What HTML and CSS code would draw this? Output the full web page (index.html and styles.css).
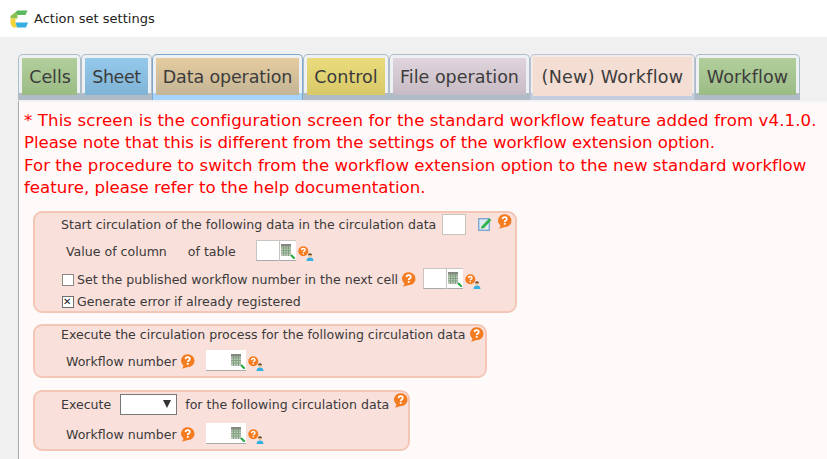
FILE: index.html
```html
<!DOCTYPE html>
<html lang="en">
<head>
<meta charset="utf-8">
<title>Action set settings</title>
<link rel="stylesheet" href="styles.css">
</head>
<body>
<svg class="defs" width="0" height="0" aria-hidden="true">
  <defs>
    <symbol id="help" viewBox="0 0 14 15">
      <path d="M7.300 .3a6.400 6.400 0 0 1 .6 12.800C6 13.300 3.500 14.800 1.200 14.600c1-.8 1.600-1.600 1.700-3A6.400 6.400 0 0 1 7.300 .3z" fill="#f47c20"/>
      <path d="M5 5.100c.1-1.400 1-2 2.200-2 1.300 0 2.100.8 2.100 1.800 0 1.500-2.100 1.600-2.100 3.100" fill="none" stroke="#fff" stroke-width="1.700"/>
      <rect x="6.300" y="8.900" width="1.800" height="1.800" fill="#fff"/>
    </symbol>
    <symbol id="grid" viewBox="0 0 16 16">
      <rect x="1" y="1" width="10" height="12" fill="#c5c9c2"/>
      <path d="M1 5h10M1 7.500h10M1 10h10M3.500 3v10M6 3v10M8.500 3v10" stroke="#7da47d" stroke-width="1"/>
      <rect x="1" y="1" width="10" height="2.500" fill="#83897f"/>
      <path d="M11 12l3.700 3.700" stroke="#22a83a" stroke-width="2"/>
    </symbol>
    <symbol id="helpuser" viewBox="0 0 16 15">
      <circle cx="5.300" cy="5.300" r="5" fill="#f47c20"/>
      <path d="M3.400 4.100c.1-1.100.9-1.600 1.900-1.600 1.100 0 1.800.7 1.800 1.400 0 1.200-1.800 1.300-1.800 2.400" fill="none" stroke="#fff" stroke-width="1.300"/>
      <rect x="4.600" y="7" width="1.300" height="1.300" fill="#fff"/>
      <circle cx="12" cy="9.500" r="1.900" fill="#f1c9a0"/>
      <path d="M10 9.300a2 2 0 0 1 4 0z" fill="#6b4a2c"/>
      <path d="M8.500 15c0-2.300 1.500-3.400 3.500-3.400s3.500 1.100 3.500 3.400z" fill="#35aee2"/>
    </symbol>
    <symbol id="edit" viewBox="0 0 14 14">
      <rect x=".7" y="1.700" width="10.600" height="11.600" fill="#dfe9ef" stroke="#7fa8d8" stroke-width="1.400"/>
      <path d="M3.500 9.500l7.500-8 2.500 1.500-7.500 8-3 .8z" fill="#2fb24a"/>
    </symbol>
  </defs>
</svg>
<header class="titlebar">
  <svg class="logo" viewBox="0 0 18 18" width="18" height="18" aria-hidden="true">
    <path d="M5 2.500L7.500 .5H17.500L15.500 5H7.500z" fill="#5cb85c"/>
    <path d="M.5 6L5 2.500 7.500 5V8.500H.5z" fill="#8cc152"/>
    <path d="M.5 8.500H5.500V13L7 17.500H3L.5 14z" fill="#f5d33c"/>
    <path d="M5.500 12.500H18L16 17.500H7z" fill="#35aee2"/>
  </svg>
  <span class="title">Action set settings</span>
</header>
<main class="page">
  <nav class="tabs">
    <div class="tab cells"><span>Cells</span></div>
    <div class="tab sheet"><span>Sheet</span></div>
    <div class="tab dataop"><span>Data operation</span></div>
    <div class="tab control"><span>Control</span></div>
    <div class="tab fileop"><span>File operation</span></div>
    <div class="tab newwf"><span>(New) Workflow</span></div>
    <div class="tab wf"><span>Workflow</span></div>
  </nav>
  <section class="panel">
    <p class="notice"><span class="l1">* This screen is the configuration screen for the standard workflow feature added from v4.1.0.</span><span class="l2">Please note that this is different from the settings of the workflow extension option.</span><span class="l3">For the procedure to switch from the workflow extension option to the new standard workflow</span><span>feature, please refer to the help documentation.</span></p>

    <div class="box box-start">
      <div class="row head">
        <span>Start circulation of the following data in the circulation data</span>
        <span class="cellinput"></span>
        <svg class="ic-edit"><use href="#edit"/></svg>
        <svg class="ic-help raised"><use href="#help"/></svg>
      </div>
      <div class="row sub tall">
        <span class="gap-col">Value of column</span><span>of table</span>
        <span class="picker framed first"><svg class="ic-grid"><use href="#grid"/></svg></span>
        <svg class="ic-user"><use href="#helpuser"/></svg>
      </div>
      <div class="row check next">
        <span class="cb"></span>
        <span>Set the published workflow number in the next cell</span>
        <svg class="ic-help"><use href="#help"/></svg>
        <span class="picker framed boxed"><svg class="ic-grid"><use href="#grid"/></svg></span>
        <svg class="ic-user"><use href="#helpuser"/></svg>
      </div>
      <div class="row check last">
        <span class="cb on"></span>
        <span>Generate error if already registered</span>
      </div>
    </div>

    <div class="box box-exec">
      <div class="row head">
        <span>Execute the circulation process for the following circulation data</span>
        <svg class="ic-help"><use href="#help"/></svg>
      </div>
      <div class="row sub wfrow">
        <span>Workflow number</span>
        <svg class="ic-help"><use href="#help"/></svg>
        <span class="picker"><svg class="ic-grid"><use href="#grid"/></svg></span>
        <svg class="ic-user"><use href="#helpuser"/></svg>
      </div>
    </div>

    <div class="box box-sel">
      <div class="row head">
        <span>Execute</span>
        <span class="select"></span>
        <span>for the following circulation data</span>
        <svg class="ic-help raised2"><use href="#help"/></svg>
      </div>
      <div class="row sub wfrow">
        <span>Workflow number</span>
        <svg class="ic-help"><use href="#help"/></svg>
        <span class="picker"><svg class="ic-grid"><use href="#grid"/></svg></span>
        <svg class="ic-user"><use href="#helpuser"/></svg>
      </div>
    </div>
  </section>
</main>
</body>
</html>
```
FILE: styles.css
```css
* { box-sizing: border-box; }
html, body { margin: 0; height: 100%; overflow: hidden; }
body { font-family: "DejaVu Sans", Verdana, sans-serif; background: #f0f0f0; color: #333; width: 827px; height: 459px; }
.defs { position: absolute; }

.titlebar { height: 37px; background: #fff; display: flex; align-items: center; padding: 0 0 0 10px; gap: 6px; }
.logo { display: block; flex: none; }
.title { font-size: 13px; color: #222; }

.page { padding: 17px 0 0 18px; }
.tabs { display: flex; height: 46px; }
.tab { flex: none; height: 46px; padding: 3px 3px 5px; border: 1px solid #aebcc8; border-bottom: 0; border-radius: 5px 5px 0 0; background: linear-gradient(#eef1f3 0, #eef1f3 85%, #afbcc6 85%); }
.tab span { display: block; height: 37px; padding: 0; font-size: 17.500px; line-height: 38px; color: #3c3c3c; white-space: nowrap; text-align: center; }
.cells { width: 63px; }
.sheet { width: 71px; }
.dataop { width: 151px; border-color: #7fa7cc; background: linear-gradient(#eef1f3 0, #eef1f3 85%, #a6d4fa 85%); }
.control { width: 86px; }
.fileop { width: 141px; }
.newwf { width: 165px; border-color: #b8c2d4; background: linear-gradient(#f2ece8 0, #f2ece8 85%, #c5cedf 85%); padding: 2px 2px 5px; }
.wf { width: 105px; }
.cells span { background: linear-gradient(#b2cf9b, #9bbb85); letter-spacing: -.1px; padding-left: 1px; }
.sheet span { background: linear-gradient(#95c9ec, #7fb4d6); letter-spacing: -.4px; }
.dataop span { background: linear-gradient(#e6cb9f, #c3b596); letter-spacing: -.14px; }
.control span { background: linear-gradient(#eadc7c, #d8c868); }
.fileop span { background: linear-gradient(#e0d5dc, #c6bac4); }
.newwf span { background: #f4ddd3; height: 39px; line-height: 40px; letter-spacing: .3px; }
.wf span { background: linear-gradient(#b2cf9b, #9bbb85); letter-spacing: .15px; }

.panel { background: #fffafa; border-left: 1px solid #a9a9a9; border-top: 2px solid #f3f3f3; box-shadow: inset 1px 0 0 #fff; padding: 8px 0 0 5px; height: 360px; overflow: hidden; }
.notice { margin: 0 0 11px; color: #f00; font-size: 16.600px; line-height: 22.400px; white-space: nowrap; }
.notice span { display: block; }
.l1 { letter-spacing: .105px; }
.l2 { letter-spacing: -.058px; }
.l3 { letter-spacing: .02px; }

.box { background: #fae0da; border: 2px solid #f3c6b5; border-radius: 9px; padding: 0 4px 0 26px; margin: 0 0 11px 9px; font-size: 12.570px; color: #3a3a3a; }
.box-start { width: 484px; height: 102px; padding-top: 1px; }
.box-exec { width: 454px; height: 54px; }
.box-sel { width: 377px; height: 61px; margin-top: 12px; padding-top: 2px; }
.row { display: flex; align-items: center; white-space: nowrap; }
.row > * { flex: none; }
.head { height: 21px; }
.sub { padding-left: 5px; }
.tall { height: 30px; margin-top: 2px; }
.check { padding-left: 1px; }
.next { height: 26px; }
.last { height: 18px; }
.wfrow { height: 30px; }
.box-exec .head { height: 17px; }
.box-exec .wfrow { margin-top: 4px; }
.box-sel .head { height: 22px; }
.box-sel .wfrow { margin-top: 4px; }
.gap-col { margin-right: 21px; }

.cellinput { width: 24px; height: 21px; margin-left: 6px; background: #fff; border: 1px solid #c9c4c0; }
.ic-edit { width: 14px; height: 14px; margin-left: 12px; }
.ic-help { width: 15px; height: 15px; margin-left: 3px; }
.raised { margin-left: 5px; margin-top: -5px; }
.raised2 { margin-left: 4px; margin-top: -9px; }
.ic-user { width: 16px; height: 15px; margin-left: 2px; margin-top: 3px; }

.picker { display: flex; justify-content: flex-end; align-items: flex-end; width: 40px; height: 21px; background: #fff; border-bottom: 1px solid #aaa; margin-left: 11px; margin-bottom: 3px; }
.framed { position: relative; border-top: 1px solid #c9c4c0; border-left: 1px solid #c9c4c0; }
.framed::before { content: ""; position: absolute; right: 16px; top: -1px; bottom: -1px; width: 1px; background: #c9c4c0; }
.first { margin-left: 20px; }
.boxed { margin-left: 7px; }
.ic-grid { width: 16px; height: 16px; margin-right: 0; margin-bottom: 1px; }
.cb { width: 12px; height: 12px; margin-right: 3px; background: #fff; border: 1px solid #8a8a8a; position: relative; }
.cb.on { border-color: #6f6f6f; }
.cb.on::after { content: "\2715"; position: absolute; left: 0; top: -2px; font: 700 10px/14px "DejaVu Sans", sans-serif; color: #222; }
.select { position: relative; width: 57px; height: 21px; margin: 0 8px 0 9px; background: #fff; border: 1px solid #777; }
.select::after { content: ""; position: absolute; right: 5px; top: 5px; border: 4.500px solid transparent; border-top: 8px solid #333; border-bottom: 0; }
```
